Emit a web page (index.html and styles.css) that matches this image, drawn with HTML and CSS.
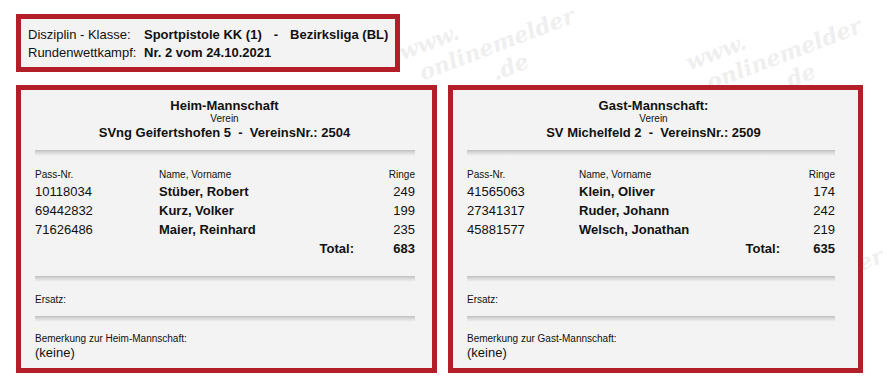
FILE: index.html
```html
<!DOCTYPE html>
<html lang="de">
<head>
<meta charset="utf-8">
<title>Rundenwettkampf</title>
<link rel="stylesheet" href="styles.css">
</head>
<body>
<div class="wm-layer" aria-hidden="true">
  <div class="wm wm-a">www.<br><span class="wm-mid">onlinemelder</span><br><span class="wm-end">.de</span></div>
  <div class="wm wm-b">www.<br><span class="wm-mid">onlinemelder</span><br><span class="wm-end">.de</span></div>
  <div class="wm wm-c">www.<br><span class="wm-mid">onlinemelder</span><br><span class="wm-end">.de</span></div>
</div>
<main class="page">
  <section class="info">
    <div class="info-grid">
      <span>Disziplin - Klasse:</span>
      <b>Sportpistole KK (1)</b>
      <b class="info-sep">-</b>
      <b>Bezirksliga (BL)</b>
      <span>Rundenwettkampf:</span>
      <b class="info-wide">Nr. 2 vom 24.10.2021</b>
    </div>
  </section>

  <div class="teams">
    <section class="panel panel--home">
      <header class="panel-head">
        <div class="panel-title">Heim-Mannschaft</div>
        <div class="panel-sub">Verein</div>
        <div class="panel-club">SVng Geifertshofen 5&nbsp; - &nbsp;VereinsNr.: 2504</div>
      </header>
      <div class="panel-body">
        <div class="divider"></div>
        <div class="rows">
          <span class="col-head">Pass-Nr.</span><span class="col-head">Name, Vorname</span><span class="col-head num">Ringe</span>
          <span>10118034</span><b>Stüber, Robert</b><span class="num">249</span>
          <span>69442832</span><b>Kurz, Volker</b><span class="num">199</span>
          <span>71626486</span><b>Maier, Reinhard</b><span class="num">235</span>
        </div>
        <div class="total"><b>Total:</b><b class="total-val">683</b></div>
        <div class="divider divider--after-total"></div>
        <div class="label">Ersatz:</div>
        <div class="divider divider--mid"></div>
        <div class="label label--tight">Bemerkung zur Heim-Mannschaft:</div>
        <div class="remark">(keine)</div>
      </div>
    </section>

    <section class="panel panel--guest">
      <header class="panel-head">
        <div class="panel-title">Gast-Mannschaft:</div>
        <div class="panel-sub">Verein</div>
        <div class="panel-club">SV Michelfeld 2&nbsp; - &nbsp;VereinsNr.: 2509</div>
      </header>
      <div class="panel-body">
        <div class="divider"></div>
        <div class="rows">
          <span class="col-head">Pass-Nr.</span><span class="col-head">Name, Vorname</span><span class="col-head num">Ringe</span>
          <span>41565063</span><b>Klein, Oliver</b><span class="num">174</span>
          <span>27341317</span><b>Ruder, Johann</b><span class="num">242</span>
          <span>45881577</span><b>Welsch, Jonathan</b><span class="num">219</span>
        </div>
        <div class="total"><b>Total:</b><b class="total-val">635</b></div>
        <div class="divider divider--after-total"></div>
        <div class="label">Ersatz:</div>
        <div class="divider divider--mid"></div>
        <div class="label label--tight">Bemerkung zur Gast-Mannschaft:</div>
        <div class="remark">(keine)</div>
      </div>
    </section>
  </div>
</main>
</body>
</html>
```

FILE: styles.css
```css
* { box-sizing: border-box; }

html, body {
  margin: 0;
  padding: 0;
  background: #ffffff;
}

body {
  position: relative;
  width: 887px;
  height: 392px;
  overflow: hidden;
  font-family: "Liberation Sans", Arial, sans-serif;
  font-size: 13px;
  color: #111111;
}

b { font-weight: bold; }

/* watermark */
.wm-layer {
  position: absolute;
  inset: 0;
  overflow: hidden;
  pointer-events: none;
  z-index: 0;
}

.wm {
  position: absolute;
  transform: rotate(-21deg);
  transform-origin: left top;
  font-family: "DejaVu Serif", serif;
  font-weight: bold;
  font-style: italic;
  font-size: 22px;
  line-height: 26px;
  color: #efefef;
  white-space: nowrap;
}

.wm-mid { padding-left: 12px; }
.wm-end { padding-left: 80px; }

.wm-a { left: 395px; top: 41px; }
.wm-b { left: 682px; top: 51px; }
.wm-c { left: 704px; top: 281px; }

/* page */
.page {
  position: relative;
  z-index: 1;
  padding: 14px 0 0 16px;
}

.info {
  width: fit-content;
  border: 5px solid #b21f28;
  background: #f3f3f3;
  padding: 7px 7px 5px 7px;
}

.info-grid {
  display: grid;
  grid-template-columns: 116px auto auto auto;
  line-height: 18px;
  white-space: nowrap;
}

.info-sep { padding: 0 12px; }
.info-wide { grid-column: 2 / 5; }

.teams {
  display: flex;
  gap: 11px;
  margin-top: 13px;
  align-items: stretch;
}

.panel {
  border: 5px solid #b21f28;
  background: #f3f3f3;
  padding: 8px 17px 8px 13px;
}

.panel--home {
  width: 421px;
  --body-w: 380px;
  --pass-col: 124px;
  --ringe-col: 61px;
}

.panel--guest {
  width: 415px;
  --body-w: 368px;
  --pass-col: 112px;
  --ringe-col: 55px;
}

.panel-head {
  text-align: center;
}

.panel-title {
  font-weight: bold;
  font-size: 13px;
  line-height: 15px;
}

.panel-sub {
  font-size: 10px;
  line-height: 12px;
}

.panel-club {
  font-weight: bold;
  font-size: 13px;
  line-height: 15px;
  white-space: nowrap;
}

.panel-body {
  width: var(--body-w);
  margin-left: 1px;
}

.divider {
  height: 6px;
  background: linear-gradient(to bottom, #bdbdbd 0%, #d6d6d6 35%, #f3f3f3 100%);
  margin: 10px 0 11px;
}

.divider--after-total { margin: 18px 0 10px; }
.divider--mid { margin: 9px 0 11px; }

.rows {
  display: grid;
  grid-template-columns: var(--pass-col) 1fr auto;
  font-size: 13px;
  line-height: 19px;
  white-space: nowrap;
}

.col-head {
  font-size: 10px;
  line-height: 15px;
}

.num { text-align: right; }

.total {
  display: flex;
  justify-content: flex-end;
  line-height: 19px;
}

.total-val {
  width: var(--ringe-col);
  text-align: right;
}

.label {
  font-size: 10px;
  line-height: 15px;
}

.label--tight { line-height: 12px; }

.remark {
  font-size: 13px;
  line-height: 15px;
}
```
